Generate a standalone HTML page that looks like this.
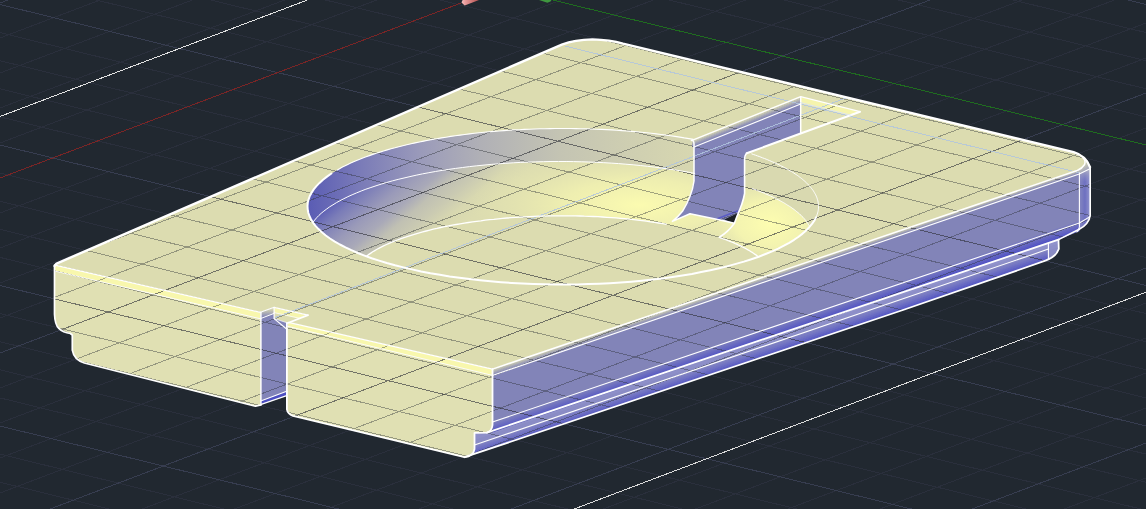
<!DOCTYPE html>
<html><head><meta charset="utf-8"><title>CAD view</title>
<style>html,body{margin:0;padding:0;background:#212830;overflow:hidden}svg{display:block}</style></head>
<body>
<svg width="1146" height="509" viewBox="0 0 1146 509" shape-rendering="geometricPrecision">
<defs>
<clipPath id="obj"><polygon points="54.6,264.8 56.5,263.2 561.8,44.3 575.0,40.3 592.4,39.2 610.0,40.6 623.0,43.5 1073.7,152.0 1082.0,155.5 1087.5,161.0 1090.4,167.4 1090.4,168.5 1079.3,173.9 1077.3,170.5 492.5,369.1 287.8,322.3 308.0,315.1 274.1,307.3 260.5,312.2"/><polygon points="54.4,265.0 260.9,312.6 260.9,405.2 255.5,406.2 84.3,363.0 76.0,358.5 72.3,350.2 72.3,335.0 70.3,333.5 58.8,328.4 55.2,322.0 54.4,314.3"/><polygon points="286.9,322.0 492.5,369.1 492.5,425.0 491.0,430.0 487.0,432.6 474.5,432.6 474.5,449.0 471.5,454.5 464.5,457.2 293.0,415.8 289.0,413.5 286.9,409.4"/><polygon points="492.5,369.1 1077.3,170.5 1079.3,173.9 1079.3,231.3 1058.5,239.6 492.5,432.4"/><polygon points="474.5,432.6 492.5,432.4 1058.5,239.6 1058.8,249.0 1054.0,256.0 1045.4,260.7 903.0,310.0 464.5,457.2 471.5,454.5 474.5,449.0"/><polygon points="1079.3,173.9 1090.4,168.5 1090.4,215.3 1087.0,223.5 1079.2,229.3 1079.0,231.3"/><polygon points="260.5,312.2 274.1,307.3 308.0,315.1 287.8,323.0 286.7,395.6 260.5,404.6"/></clipPath>
<clipPath id="e1"><ellipse cx="563" cy="206.5" rx="255.5" ry="78"/></clipPath>
<clipPath id="rU"><polygon points="492.5,369.1 1077.3,170.5 1079.3,173.9 1079.3,231.3 1058.5,239.6 492.5,432.4"/></clipPath>
<clipPath id="rL"><polygon points="474.5,432.6 492.5,432.4 1058.5,239.6 1058.8,249.0 1054.0,256.0 1045.4,260.7 903.0,310.0 464.5,457.2 471.5,454.5 474.5,449.0"/></clipPath>
<linearGradient id="pg" gradientUnits="userSpaceOnUse" x1="308.0" y1="0.0" x2="708.0" y2="0.0"><stop offset="0.000" stop-color="#5a5cb4"/><stop offset="0.130" stop-color="#7a7bb8"/><stop offset="0.280" stop-color="#9a9aba"/><stop offset="0.430" stop-color="#b0b0b6"/><stop offset="0.630" stop-color="#c4c4b3"/><stop offset="0.830" stop-color="#d0d0b1"/><stop offset="1.000" stop-color="#d9d9b0"/></linearGradient>
<linearGradient id="pg2" gradientUnits="userSpaceOnUse" x1="309.1" y1="217.4" x2="377.8" y2="298.2"><stop offset="0.000" stop-color="#5557b4"/><stop offset="0.151" stop-color="#7a7cb8"/><stop offset="0.340" stop-color="#9a9ab9"/><stop offset="0.481" stop-color="#a9a9b8"/><stop offset="0.594" stop-color="#c0c0b3"/><stop offset="0.717" stop-color="#cacab2"/><stop offset="0.858" stop-color="#d8d8b0"/><stop offset="1.000" stop-color="#dcdcb0"/></linearGradient>
<clipPath id="e2"><ellipse cx="560" cy="238.9" rx="253" ry="77.4"/></clipPath>
<radialGradient id="hl1" gradientUnits="userSpaceOnUse" cx="640" cy="205" r="170" gradientTransform="translate(640 205) scale(1 0.33) translate(-640 -205)"><stop offset="0" stop-color="#fbfbb0" stop-opacity="1"/><stop offset="0.45" stop-color="#f4f4b0" stop-opacity="0.75"/><stop offset="1" stop-color="#e8e8b0" stop-opacity="0"/></radialGradient>
<radialGradient id="hl2" gradientUnits="userSpaceOnUse" cx="770" cy="224" r="66" gradientTransform="translate(770 224) scale(1 0.7) translate(-770 -224)"><stop offset="0" stop-color="#fdfdb0" stop-opacity="1"/><stop offset="0.5" stop-color="#f8f8b0" stop-opacity="0.8"/><stop offset="1" stop-color="#e6e6b0" stop-opacity="0"/></radialGradient>
<linearGradient id="fr" gradientUnits="userSpaceOnUse" x1="0" y1="0" x2="2.2" y2="6.6"><stop offset="0" stop-color="#dcdcb0"/><stop offset="1" stop-color="#8284b8"/></linearGradient>
<linearGradient id="cg" gradientUnits="userSpaceOnUse" x1="1079" y1="0" x2="1091" y2="0"><stop offset="0" stop-color="#8688c0"/><stop offset="0.5" stop-color="#6e70c0"/><stop offset="1" stop-color="#9a9cd0"/></linearGradient>
</defs>
<rect width="1146" height="509" fill="#212830"/>
<g fill="none" stroke-width="1" shape-rendering="crispEdges">
<path d="M0.0 -137.0L1146.0 -572.0M0.0 -102.0L1146.0 -537.0M0.0 -67.0L1146.0 -502.0M0.0 -32.0L1146.0 -467.0M0.0 38.0L1146.0 -397.0M0.0 73.0L1146.0 -362.0M0.0 108.0L1146.0 -327.0M0.0 143.0L1146.0 -292.0M0.0 213.0L1146.0 -222.0M0.0 248.0L1146.0 -187.0M0.0 283.0L1146.0 -152.0M0.0 318.0L1146.0 -117.0M0.0 388.0L1146.0 -47.0M0.0 423.0L1146.0 -12.0M0.0 458.0L1146.0 23.0M0.0 493.0L1146.0 58.0M0.0 563.0L1146.0 128.0M0.0 598.0L1146.0 163.0M0.0 633.0L1146.0 198.0M0.0 668.0L1146.0 233.0M0.0 738.0L1146.0 303.0M0.0 773.0L1146.0 338.0M0.0 808.0L1146.0 373.0M0.0 843.0L1146.0 408.0M0.0 913.0L1146.0 478.0M0.0 948.0L1146.0 513.0M0.0 983.0L1146.0 548.0M0.0 1018.0L1146.0 583.0M0.0 1088.0L1146.0 653.0M0.0 1123.0L1146.0 688.0M0.0 1158.0L1146.0 723.0M0.0 1193.0L1146.0 758.0M0.0 1263.0L1146.0 828.0M0.0 1298.0L1146.0 863.0M0.0 1333.0L1146.0 898.0M0.0 1368.0L1146.0 933.0M0.0 1438.0L1146.0 1003.0M0.0 1473.0L1146.0 1038.0M0.0 1508.0L1146.0 1073.0M0.0 1543.0L1146.0 1108.0M0.0 -473.2L1146.0 -192.2M0.0 -445.1L1146.0 -164.1M0.0 -388.9L1146.0 -107.9M0.0 -360.8L1146.0 -79.8M0.0 -332.7L1146.0 -51.7M0.0 -304.6L1146.0 -23.6M0.0 -248.4L1146.0 32.6M0.0 -220.3L1146.0 60.7M0.0 -192.2L1146.0 88.8M0.0 -164.1L1146.0 116.9M0.0 -107.9L1146.0 173.1M0.0 -79.8L1146.0 201.2M0.0 -51.7L1146.0 229.3M0.0 -23.6L1146.0 257.4M0.0 32.6L1146.0 313.6M0.0 60.7L1146.0 341.7M0.0 88.8L1146.0 369.8M0.0 116.9L1146.0 397.9M0.0 173.1L1146.0 454.1M0.0 201.2L1146.0 482.2M0.0 229.3L1146.0 510.3M0.0 257.4L1146.0 538.4M0.0 313.6L1146.0 594.6M0.0 341.7L1146.0 622.7M0.0 369.8L1146.0 650.8M0.0 397.9L1146.0 678.9M0.0 454.1L1146.0 735.1M0.0 482.2L1146.0 763.2M0.0 510.3L1146.0 791.3M0.0 538.4L1146.0 819.4M0.0 594.6L1146.0 875.6M0.0 622.7L1146.0 903.7M0.0 650.8L1146.0 931.8M0.0 678.9L1146.0 959.9" stroke="#2a2f3c"/>
<path d="M0.0 -172.0L1146.0 -607.0M0.0 3.0L1146.0 -432.0M0.0 353.0L1146.0 -82.0M0.0 528.0L1146.0 93.0M0.0 703.0L1146.0 268.0M0.0 878.0L1146.0 443.0M0.0 1053.0L1146.0 618.0M0.0 1228.0L1146.0 793.0M0.0 1403.0L1146.0 968.0M0.0 -417.0L1146.0 -136.0M0.0 -276.5L1146.0 4.5M0.0 4.5L1146.0 285.5M0.0 145.0L1146.0 426.0M0.0 285.5L1146.0 566.5M0.0 426.0L1146.0 707.0M0.0 566.5L1146.0 847.5" stroke="#373d50"/>
<path d="M0 178L461 3" stroke="#7a2526"/>
<path d="M551 -0.4L1146 145" stroke="#1f6c1f"/>
<path d="M0 116.5L307.4 0" stroke="#e2e2e2"/>
<path d="M574.2 509L1146 292.2" stroke="#dcdcdc"/>
</g>
<linearGradient id="pk" gradientUnits="userSpaceOnUse" x1="461" y1="0" x2="479" y2="0"><stop offset="0" stop-color="#f6c4c4"/><stop offset="0.25" stop-color="#e89a9a"/><stop offset="1" stop-color="#b45050"/></linearGradient>
<polygon points="461.5,2.6 464.7,5.4 479,0 462.6,0" fill="url(#pk)"/>
<polygon points="539,0 547.4,2.8 550.5,1.4 551.5,0" fill="#3f973f"/>
<polygon points="474.5,432.6 492.5,432.4 1058.5,239.6 1058.8,249.0 1054.0,256.0 1045.4,260.7 903.0,310.0 464.5,457.2 471.5,454.5 474.5,449.0" fill="#8a8cc0"/>
<polygon points="492.5,369.1 1077.3,170.5 1079.3,173.9 1079.3,231.3 1058.5,239.6 492.5,432.4" fill="#8284b8"/>
<polygon points="1079.3,173.9 1090.4,168.5 1090.4,215.3 1087.0,223.5 1079.2,229.3 1079.0,231.3" fill="url(#cg)"/>
<polygon points="260.5,312.2 274.1,307.3 308.0,315.1 287.8,323.0 286.7,395.6 260.5,404.6" fill="#8284b8"/>
<polygon points="54.4,265.0 260.9,312.6 260.9,405.2 255.5,406.2 84.3,363.0 76.0,358.5 72.3,350.2 72.3,335.0 70.3,333.5 58.8,328.4 55.2,322.0 54.4,314.3" fill="#e0e0b3"/>
<polygon points="286.9,322.0 492.5,369.1 492.5,425.0 491.0,430.0 487.0,432.6 474.5,432.6 474.5,449.0 471.5,454.5 464.5,457.2 293.0,415.8 289.0,413.5 286.9,409.4" fill="#e0e0b3"/>
<polygon points="54.6,264.8 56.5,263.2 561.8,44.3 575.0,40.3 592.4,39.2 610.0,40.6 623.0,43.5 1073.7,152.0 1082.0,155.5 1087.5,161.0 1090.4,167.4 1090.4,168.5 1079.3,173.9 1077.3,170.5 492.5,369.1 287.8,322.3 308.0,315.1 274.1,307.3 260.5,312.2" fill="#dcdcb0"/>
<linearGradient id="cg2" gradientUnits="userSpaceOnUse" x1="1081" y1="160" x2="1088.5" y2="172"><stop offset="0" stop-color="#dcdcb0"/><stop offset="0.35" stop-color="#cfcfb2"/><stop offset="1" stop-color="#9496c2"/></linearGradient>
<polygon points="1083.0,157.3 1087.5,161.0 1090.4,167.4 1090.4,168.5 1079.3,173.9 1077.3,170.5 1082.0,168.4 1084.8,164.0 1085.2,160.0" fill="url(#cg2)"/>
<linearGradient id="cg3" gradientUnits="userSpaceOnUse" x1="0" y1="169" x2="0" y2="182"><stop offset="0" stop-color="#b8b8c0" stop-opacity="0.9"/><stop offset="1" stop-color="#9092c8" stop-opacity="0"/></linearGradient>
<polygon points="1079.3,173.9 1090.4,168.5 1090.4,183.0 1079.3,186.0" fill="url(#cg3)"/>
<polygon points="492.5,369.1 1077.3,170.5 1077.3,171.2 492.5,370.2" fill="rgb(214,214,176)"/><polygon points="492.5,369.9 1077.3,170.9 1077.3,171.7 492.5,371.0" fill="rgb(203,204,178)"/><polygon points="492.5,370.7 1077.3,171.4 1077.3,172.2 492.5,371.8" fill="rgb(192,192,178)"/><polygon points="492.5,371.5 1077.3,171.8 1077.3,172.6 492.5,372.6" fill="rgb(181,182,180)"/><polygon points="492.5,372.3 1077.3,172.3 1077.3,173.1 492.5,373.4" fill="rgb(169,170,180)"/><polygon points="492.5,373.1 1077.3,172.8 1077.3,173.5 492.5,374.2" fill="rgb(158,160,182)"/><polygon points="492.5,373.9 1077.3,173.2 1077.3,174.0 492.5,375.0" fill="rgb(147,148,182)"/><polygon points="492.5,374.7 1077.3,173.7 1077.3,174.4 492.5,375.8" fill="rgb(136,138,184)"/>
<g clip-path="url(#rU)">
<polygon points="492.5,422.5 1090.0,217.0 1090.0,218.8 492.5,424.3" fill="rgb(124,126,189)"/><polygon points="492.5,424.0 1090.0,218.5 1090.0,220.3 492.5,425.8" fill="rgb(117,119,190)"/><polygon points="492.5,425.5 1090.0,220.0 1090.0,221.8 492.5,427.3" fill="rgb(110,112,192)"/><polygon points="492.5,427.0 1090.0,221.5 1090.0,223.3 492.5,428.8" fill="rgb(103,105,193)"/><polygon points="492.5,428.5 1090.0,223.0 1090.0,224.8 492.5,430.3" fill="rgb(96,98,194)"/><polygon points="492.5,430.0 1090.0,224.5 1090.0,226.3 492.5,431.8" fill="rgb(89,91,196)"/><polygon points="492.5,431.5 1090.0,226.0 1090.0,227.8 492.5,433.3" fill="rgb(82,84,197)"/>
</g>
<g clip-path="url(#rL)">
<polygon points="474.0,433.0 1058.5,240.0 1058.5,244.0 474.0,437.0" fill="rgb(144,146,203)"/><polygon points="474.0,436.7 1058.5,243.7 1058.5,247.6 474.0,440.6" fill="rgb(141,143,200)"/><polygon points="474.0,440.3 1058.5,247.3 1058.5,251.3 474.0,444.3" fill="rgb(138,140,197)"/>
<polygon points="474.0,445.0 1048.4,249.1 1048.4,251.2 474.0,447.1" fill="rgb(130,132,194)"/><polygon points="474.0,446.8 1048.4,250.9 1048.4,253.0 474.0,448.9" fill="rgb(121,123,194)"/><polygon points="474.0,448.6 1048.4,252.7 1048.4,254.8 474.0,450.7" fill="rgb(113,115,195)"/><polygon points="474.0,450.4 1048.4,254.5 1048.4,256.5 474.0,452.4" fill="rgb(104,106,195)"/><polygon points="474.0,452.1 1048.4,256.2 1048.4,258.3 474.0,454.2" fill="rgb(95,97,195)"/><polygon points="474.0,453.9 1048.4,258.0 1048.4,260.1 474.0,456.0" fill="rgb(87,89,196)"/><polygon points="474.0,455.7 1048.4,259.8 1048.4,261.9 474.0,457.8" fill="rgb(78,80,196)"/>
</g>
<polygon points="54.6,265.0 260.5,312.4 260.5,318.6 54.6,271.0" fill="#f8f7ad"/>
<polygon points="287.8,322.3 492.5,369.3 492.5,375.3 287.8,326.4" fill="#f8f7ad"/>
<linearGradient id="ng" gradientUnits="userSpaceOnUse" x1="0" y1="309" x2="0" y2="317"><stop offset="0" stop-color="#d6d6b2"/><stop offset="1" stop-color="#8284b8"/></linearGradient>
<polygon points="260.5,312.2 274.1,307.3 274.1,313.4 260.5,318.6" fill="url(#ng)"/>
<polygon points="274.1,307.3 308.0,315.1 287.8,323.0 274.1,318.6" fill="#dcdcb0"/>
<polygon points="274.1,307.8 306.0,315.0 299.0,318.2 274.1,312.6" fill="#f6f5ad"/>
<polygon points="274.1,318.6 287.8,323.0 286.9,330.0 274.1,320.5" fill="#8284b8"/>
<polygon points="260.7,401.0 286.7,391.2 286.7,395.6 260.5,404.6" fill="#4c4ec2"/>
<g clip-path="url(#e1)">
<rect x="300" y="120" width="530" height="170" fill="url(#pg)"/>
<ellipse cx="560" cy="238.9" rx="253" ry="77.4" fill="url(#pg2)"/>
<g clip-path="url(#e2)">
<rect x="300" y="120" width="530" height="170" fill="url(#hl1)"/>
<rect x="700" y="150" width="130" height="140" fill="url(#hl2)"/>
</g>
<ellipse cx="562" cy="280.4" rx="211" ry="64.6" fill="#dcdcb0"/>
</g>
<polygon points="800.7,96.7 860.0,111.7 801.7,133.3 800.7,133.3" fill="#e0e0b3"/>
<polygon points="800.7,96.7 860.0,111.7 851.0,115.0 800.7,102.3" fill="#f5f4ad"/>
<polygon points="694.0,141.0 800.7,97.5 800.7,133.3 746.7,153.6 744.6,160.0 744.6,193.5 740.8,208.7 737.0,216.3 734.4,223.2 723.0,220.0 715.4,218.9 690.0,213.8 672.4,221.4 682.5,211.3 690.0,196.0 694.0,181.0" fill="#8284b8"/>
<g clip-path="url(#sw)">
</g>
<polygon points="692.0,140.5 800.7,97.0 800.7,98.2 692.0,141.7" fill="rgb(214,214,177)"/><polygon points="692.0,141.4 800.7,97.9 800.7,99.2 692.0,142.7" fill="rgb(201,201,178)"/><polygon points="692.0,142.4 800.7,98.9 800.7,100.1 692.0,143.6" fill="rgb(188,189,179)"/><polygon points="692.0,143.3 800.7,99.8 800.7,101.0 692.0,144.5" fill="rgb(175,176,180)"/><polygon points="692.0,144.2 800.7,100.7 800.7,101.9 692.0,145.4" fill="rgb(162,163,181)"/><polygon points="692.0,145.1 800.7,101.6 800.7,102.9 692.0,146.4" fill="rgb(149,151,182)"/><polygon points="692.0,146.1 800.7,102.6 800.7,103.8 692.0,147.3" fill="rgb(136,138,183)"/>
<polygon points="724.3,219.6 737.5,213.2 734.4,223.2" fill="#1c2026"/>
<path d="M716.7 218.9L738 210.8" stroke="#5a5cc4" stroke-width="1.6" fill="none"/>
<g clip-path="url(#obj)" fill="none" stroke-width="1" shape-rendering="crispEdges">
<path d="M0.0 -137.0L1146.0 -572.0M0.0 -102.0L1146.0 -537.0M0.0 -67.0L1146.0 -502.0M0.0 -32.0L1146.0 -467.0M0.0 38.0L1146.0 -397.0M0.0 73.0L1146.0 -362.0M0.0 108.0L1146.0 -327.0M0.0 143.0L1146.0 -292.0M0.0 213.0L1146.0 -222.0M0.0 248.0L1146.0 -187.0M0.0 283.0L1146.0 -152.0M0.0 318.0L1146.0 -117.0M0.0 388.0L1146.0 -47.0M0.0 423.0L1146.0 -12.0M0.0 458.0L1146.0 23.0M0.0 493.0L1146.0 58.0M0.0 563.0L1146.0 128.0M0.0 598.0L1146.0 163.0M0.0 633.0L1146.0 198.0M0.0 668.0L1146.0 233.0M0.0 738.0L1146.0 303.0M0.0 773.0L1146.0 338.0M0.0 808.0L1146.0 373.0M0.0 843.0L1146.0 408.0M0.0 913.0L1146.0 478.0M0.0 948.0L1146.0 513.0M0.0 983.0L1146.0 548.0M0.0 1018.0L1146.0 583.0M0.0 1088.0L1146.0 653.0M0.0 1123.0L1146.0 688.0M0.0 1158.0L1146.0 723.0M0.0 1193.0L1146.0 758.0M0.0 1263.0L1146.0 828.0M0.0 1298.0L1146.0 863.0M0.0 1333.0L1146.0 898.0M0.0 1368.0L1146.0 933.0M0.0 1438.0L1146.0 1003.0M0.0 1473.0L1146.0 1038.0M0.0 1508.0L1146.0 1073.0M0.0 1543.0L1146.0 1108.0M0.0 -473.2L1146.0 -192.2M0.0 -445.1L1146.0 -164.1M0.0 -388.9L1146.0 -107.9M0.0 -360.8L1146.0 -79.8M0.0 -332.7L1146.0 -51.7M0.0 -304.6L1146.0 -23.6M0.0 -248.4L1146.0 32.6M0.0 -220.3L1146.0 60.7M0.0 -192.2L1146.0 88.8M0.0 -164.1L1146.0 116.9M0.0 -107.9L1146.0 173.1M0.0 -79.8L1146.0 201.2M0.0 -51.7L1146.0 229.3M0.0 -23.6L1146.0 257.4M0.0 32.6L1146.0 313.6M0.0 60.7L1146.0 341.7M0.0 88.8L1146.0 369.8M0.0 116.9L1146.0 397.9M0.0 173.1L1146.0 454.1M0.0 201.2L1146.0 482.2M0.0 229.3L1146.0 510.3M0.0 257.4L1146.0 538.4M0.0 313.6L1146.0 594.6M0.0 341.7L1146.0 622.7M0.0 369.8L1146.0 650.8M0.0 397.9L1146.0 678.9M0.0 454.1L1146.0 735.1M0.0 482.2L1146.0 763.2M0.0 510.3L1146.0 791.3M0.0 538.4L1146.0 819.4M0.0 594.6L1146.0 875.6M0.0 622.7L1146.0 903.7M0.0 650.8L1146.0 931.8M0.0 678.9L1146.0 959.9" stroke="#2e3138" stroke-opacity="0.42"/>
<path d="M0.0 -172.0L1146.0 -607.0M0.0 3.0L1146.0 -432.0M0.0 353.0L1146.0 -82.0M0.0 528.0L1146.0 93.0M0.0 703.0L1146.0 268.0M0.0 878.0L1146.0 443.0M0.0 1053.0L1146.0 618.0M0.0 1228.0L1146.0 793.0M0.0 1403.0L1146.0 968.0M0.0 -417.0L1146.0 -136.0M0.0 -276.5L1146.0 4.5M0.0 4.5L1146.0 285.5M0.0 145.0L1146.0 426.0M0.0 285.5L1146.0 566.5M0.0 426.0L1146.0 707.0M0.0 566.5L1146.0 847.5" stroke="#2e3138" stroke-opacity="0.62"/>
<path d="M275 317.6L860 92.4" stroke="#b0c4de" stroke-opacity="0.85"/>
<path d="M565 46L1080 173" stroke="#b0c4de" stroke-opacity="0.85"/>
</g>
<g fill="none" stroke="#ffffff" stroke-linejoin="round" stroke-linecap="round">
<path d="M54.6 266 L56.5 263.6 L561.8 44.6 Q575 39.6 592.4 39.4 Q610 40 623 43.6 L1073.7 152.2 Q1086 156 1090 167.2" stroke-width="2.4"/>
<path d="M1090.2 167 L1090.2 215.3 Q1089 224 1079.2 229.3" stroke-width="1.6"/>
<path d="M55 265.2L260.5 312.4" stroke-width="1.3"/>
<path d="M54.6 271L260.5 318.8" stroke-width="1" stroke-opacity="0.95"/>
<path d="M287.8 326.4L492.5 375.4" stroke-width="1" stroke-opacity="0.9"/>
<path d="M308 315.1L287.8 323" stroke-width="1.7"/>
<path d="M274.1 307.3L308 315.1 M288.5 322.3L492.5 369.1" stroke-width="1.3"/>
<path d="M274.1 312.6L299 318.2 M274.1 318.6L287.8 323" stroke-width="0.9" stroke-opacity="0.85"/>
<path d="M260.5 312.2L274.1 307.3L274.1 318.6L286.9 329.2" stroke-width="1.2"/>
<path d="M260.5 318.6L274.1 313.4" stroke-width="1"/>
<path d="M492.5 369.1L1077.3 170.5Q1082 168.6 1084.6 164.5Q1086 160.5 1083 157.6" stroke-width="1.5"/>
<path d="M492.5 375.4L1079.3 173.9L1090.4 168.6" stroke-width="1.1"/>
<path d="M492.5 422L1079.4 223L1090 216.6" stroke-width="1.1"/>
<path d="M487 432.6L1058.5 239.6" stroke-width="1.8"/>
<path d="M474.5 445L1030 255.4L1048.4 249.1" stroke-width="1.1"/>
<path d="M464.5 457.2L903 310L1045.4 260.7 Q1056 257 1058.8 249 L1058.5 239.6" stroke-width="1.8"/>
<path d="M1079.4 173L1079.4 226.7Q1079.2 230 1077 231.8 M1048.4 243L1048.4 258.4" stroke-width="1.1"/>
<path d="M1079.2 229.3 L1058.5 239.6" stroke-width="1.6"/>
<path d="M54.5 265L54.5 314.3Q55 325 58.8 328.4Q63 332.5 70.3 333.5L72.3 335L72.3 350.2Q74 360 84.3 363L255.5 406.2L260.9 405" stroke-width="1.7"/>
<path d="M260.9 312.6L260.9 405" stroke-width="1.5"/>
<path d="M286.9 323L286.9 409.4Q287.6 414 293 415.8L464.5 457.2Q473.5 456 474.5 449L474.5 432.8L487 432.6Q492 431 492.5 425L492.5 369.1" stroke-width="1.8"/>
<path d="M260.7 401L286.7 391.2 M260.5 404.6L286.7 395.6" stroke-width="1.2"/>
<path d="M693.3 139.4L688.9 138.6L684.3 137.9L679.8 137.1L675.1 136.4L670.5 135.7L665.8 135.1L661.0 134.5L656.2 133.9L651.4 133.3L646.5 132.8L641.6 132.3L636.7 131.8L631.8 131.4L626.8 131.0L621.7 130.6L616.7 130.2L611.6 129.9L606.6 129.6L601.5 129.4L596.4 129.2L591.2 129.0L586.1 128.8L580.9 128.7L575.8 128.6L570.6 128.5L565.5 128.5L560.3 128.5L555.1 128.5L550.0 128.6L544.8 128.7L539.7 128.8L534.5 129.0L529.4 129.2L524.3 129.4L519.2 129.7L514.1 129.9L509.0 130.3L504.0 130.6L499.0 131.0L494.0 131.4L489.0 131.8L484.1 132.3L479.2 132.8L474.4 133.3L469.5 133.9L464.7 134.5L460.0 135.1L455.3 135.8L450.6 136.4L446.0 137.2L441.4 137.9L436.9 138.7L432.5 139.4L428.0 140.3L423.7 141.1L419.4 142.0L415.1 142.9L411.0 143.8L406.8 144.8L402.8 145.7L398.8 146.7L394.9 147.8L391.0 148.8L387.2 149.9L383.5 151.0L379.9 152.1L376.3 153.2L372.8 154.4L369.4 155.6L366.1 156.8L362.8 158.0L359.7 159.3L356.6 160.5L353.6 161.8L350.7 163.1L347.8 164.4L345.1 165.8L342.4 167.1L339.9 168.5L337.4 169.9" stroke-width="1.15"/>
<path d="M331.4 173.5L327.0 176.6L323.0 179.7L319.5 182.9L316.4 186.1L313.7 189.4L311.6 192.7L309.8 196.0L308.6 199.3L307.8 202.6L307.5 206.0L307.7 209.3L308.3 212.7L309.4 216.0L311.0 219.3L313.0 222.6L315.5 225.9L318.5 229.1L321.9 232.3L325.8 235.5L330.0 238.5L334.8 241.6L339.9 244.5L345.5 247.4L351.4 250.2L357.8 253.0L364.5 255.6L371.6 258.2L379.1 260.6L386.8 263.0L395.0 265.3L403.4 267.4L412.1 269.4L421.1 271.4L430.4 273.2L439.9 274.8L449.6 276.4L459.5 277.8L469.7 279.1L480.0 280.3L490.4 281.3L501.0 282.2L511.7 282.9L522.5 283.5L533.4 284.0L544.3 284.3L555.3 284.5L566.3 284.5L577.3 284.4L588.2 284.1L599.1 283.7L609.9 283.2L620.7 282.5L631.3 281.7L641.8 280.7L652.2 279.6L662.4 278.4L672.4 277.0L682.3 275.5L691.9 273.9L701.2 272.1L710.3 270.2L719.2 268.2L727.7 266.1L735.9 263.9L743.9 261.6L751.4 259.2L758.7 256.7L765.6 254.0L772.1 251.3L778.2 248.6L783.9 245.7L789.2 242.8L794.1 239.8L798.6 236.7L802.6 233.6L806.2 230.4L809.3 227.2L812.0 223.9L814.3 220.7L816.0 217.4" stroke-width="2"/>
<path d="M751.8 153.9L753.7 154.6L755.5 155.2L757.4 155.9L759.2 156.5L761.0 157.2L762.7 157.9L764.5 158.5L766.2 159.2L767.9 159.9L769.5 160.6L771.2 161.3L772.8 162.0L774.4 162.7L775.9 163.4L777.5 164.1L779.0 164.8L780.5 165.6L781.9 166.3L783.4 167.0L784.8 167.8L786.2 168.5L787.5 169.3L788.8 170.0L790.1 170.8L791.4 171.5L792.7 172.3L793.9 173.1L795.1 173.9L796.2 174.6L797.4 175.4L798.5 176.2L799.5 177.0L800.6 177.8L801.6 178.6L802.6 179.4L803.5 180.2L804.5 181.0L805.4 181.8L806.3 182.6L807.1 183.5L807.9 184.3L808.7 185.1L809.5 185.9L810.2 186.8L810.9 187.6L811.5 188.4L812.2 189.3L812.8 190.1L813.4 190.9L813.9 191.8L814.4 192.6L814.9 193.5L815.4 194.3L815.8 195.1L816.2 196.0L816.5 196.8L816.9 197.7L817.2 198.6L817.4 199.4L817.7 200.3L817.9 201.1L818.1 202.0L818.2 202.8L818.3 203.7L818.4 204.5L818.5 205.4L818.5 206.3L818.5 207.1L818.5 208.0L818.4 208.8L818.3 209.7L818.2 210.5L818.0 211.4L817.8 212.2L817.6 213.1L817.3 214.0L817.0 214.8L816.7 215.7L816.4 216.5L816.0 217.4" stroke-width="1"/>
</g>
<g clip-path="url(#e1)" fill="none" stroke="#fff">
<path d="M315.6 258.9L313.8 256.7L312.1 254.4L310.7 252.1L309.5 249.9L308.6 247.6L307.9 245.2L307.3 242.9L307.1 240.6L307.0 238.3L307.2 236.0L307.6 233.7L308.2 231.4L309.1 229.1L310.1 226.8L311.4 224.5L313.0 222.2L314.7 220.0L316.7 217.7L318.8 215.5L321.2 213.3L323.9 211.1L326.7 209.0L329.7 206.8L333.0 204.8L336.4 202.7L340.0 200.7L343.9 198.7L347.9 196.7L352.1 194.8L356.6 192.9L361.2 191.0L365.9 189.2L370.9 187.5L376.0 185.8L381.3 184.1L386.7 182.5L392.3 180.9L398.1 179.4L404.0 178.0L410.0 176.6L416.2 175.2L422.4 173.9L428.9 172.7L435.4 171.5L442.1 170.4L448.8 169.4L455.7 168.4L462.6 167.5L469.6 166.6L476.8 165.8L484.0 165.1L491.2 164.4L498.5 163.8L505.9 163.3L513.3 162.8L520.8 162.4L528.3 162.1L535.8 161.9L543.4 161.7L551.0 161.5L558.5 161.5L566.1 161.5L573.7 161.6L581.2 161.8L588.8 162.0L596.3 162.3L603.8 162.7L611.2 163.1L618.6 163.6L625.9 164.2L633.2 164.8L640.4 165.5L647.6 166.3L654.7 167.1L661.6 168.0L668.5 169.0L675.3 170.0L682.0 171.1L688.6 172.2L695.1 173.5" stroke-width="1"/>
<path d="M751.9 188.5L753.3 189.0L754.8 189.5L756.2 190.0L757.6 190.6L759.0 191.1L760.4 191.6L761.7 192.2L763.1 192.7L764.4 193.3L765.7 193.9L767.0 194.4L768.3 195.0L769.6 195.5L770.8 196.1L772.1 196.7L773.3 197.3L774.5 197.8L775.7 198.4L776.8 199.0L778.0 199.6L779.1 200.2L780.2 200.8L781.3 201.4L782.4 202.0L783.5 202.6L784.5 203.2L785.5 203.8L786.5 204.4L787.5 205.1L788.5 205.7L789.5 206.3L790.4 206.9L791.3 207.5L792.2 208.2L793.1 208.8L794.0 209.4L794.8 210.1L795.6 210.7L796.4 211.4L797.2 212.0L798.0 212.6L798.8 213.3L799.5 213.9L800.2 214.6L800.9 215.2L801.6 215.9L802.2 216.6L802.9 217.2L803.5 217.9L804.1 218.5L804.7 219.2L805.2 219.9L805.8 220.5L806.3 221.2L806.8 221.9L807.3 222.5L807.7 223.2L808.2 223.9L808.6 224.6L809.0 225.2L809.4 225.9L809.8 226.6L810.1 227.3L810.5 227.9L810.8 228.6L811.1 229.3L811.3 230.0L811.6 230.7L811.8 231.4L812.0 232.0L812.2 232.7L812.4 233.4L812.5 234.1L812.6 234.8L812.8 235.5L812.8 236.2L812.9 236.8L813.0 237.5L813.0 238.2L813.0 238.9" stroke-width="1"/>
<path d="M363.7 258.3L365.3 257.0L367.1 255.7L368.9 254.4L370.8 253.1L372.7 251.8L374.8 250.6L377.0 249.3L379.2 248.1L381.6 246.9L384.0 245.7L386.5 244.5L389.1 243.4L391.8 242.2L394.5 241.1L397.3 240.0L400.3 238.9L403.2 237.8L406.3 236.8L409.4 235.8L412.7 234.8L415.9 233.8L419.3 232.8L422.7 231.9L426.2 231.0L429.7 230.1L433.3 229.2L437.0 228.4L440.7 227.5L444.5 226.7L448.4 226.0L452.3 225.2L456.2 224.5L460.2 223.8L464.3 223.1L468.4 222.5L472.5 221.9L476.7 221.3L480.9 220.8L485.1 220.2L489.4 219.7L493.8 219.3L498.1 218.8L502.5 218.4L506.9 218.0L511.4 217.7L515.9 217.4L520.4 217.1L524.9 216.8L529.4 216.6L533.9 216.4L538.5 216.2L543.1 216.1L547.7 215.9L552.2 215.9L556.8 215.8L561.4 215.8L566.0 215.8L570.6 215.9L575.2 215.9L579.8 216.0L584.3 216.2L588.9 216.3L593.5 216.5L598.0 216.7L602.5 217.0L607.0 217.3L611.5 217.6L615.9 217.9L620.4 218.3L624.8 218.7L629.1 219.2L633.5 219.6L637.8 220.1L642.0 220.6L646.3 221.2L650.5 221.8L654.6 222.4L658.7 223.0L662.8 223.6L666.8 224.3" stroke-width="1.3"/>
<path d="M718.6 237.1L719.6 237.4L720.5 237.8L721.5 238.1L722.5 238.5L723.4 238.8L724.4 239.1L725.3 239.5L726.2 239.8L727.2 240.2L728.1 240.6L729.0 240.9L729.9 241.3L730.8 241.6L731.7 242.0L732.5 242.4L733.4 242.7L734.3 243.1L735.1 243.5L735.9 243.8L736.8 244.2L737.6 244.6L738.4 245.0L739.2 245.3L740.0 245.7L740.8 246.1L741.6 246.5L742.4 246.9L743.1 247.3L743.9 247.7L744.6 248.0L745.4 248.4L746.1 248.8L746.8 249.2L747.5 249.6L748.2 250.0L748.9 250.4L749.6 250.8L750.3 251.2L750.9 251.6L751.6 252.0L752.2 252.4L752.8 252.8L753.5 253.3L754.1 253.7L754.7 254.1L755.3 254.5L755.9 254.9L756.5 255.3L757.0 255.7L757.6 256.2L758.1 256.6L758.7 257.0L759.2 257.4L759.7 257.8L760.2 258.3L760.7 258.7L761.2 259.1L761.7 259.6L762.2 260.0L762.6 260.4L763.1 260.8L763.5 261.3L764.0 261.7L764.4 262.1L764.8 262.6L765.2 263.0L765.6 263.4L766.0 263.9L766.4 264.3L766.7 264.8L767.1 265.2L767.4 265.6L767.7 266.1L768.1 266.5L768.4 267.0L768.7 267.4L769.0 267.8L769.3 268.3L769.5 268.7L769.8 269.2" stroke-width="1.3"/>
</g>
<g fill="none" stroke="#ffffff" stroke-linejoin="round" stroke-linecap="round">
<path d="M691.4 140.4 Q694 140 694 144 L694 181 Q692 196 682.5 211.3 Q678 217 672.4 221.4 L690 213.8 L715.4 218.9 L734.4 223.2" stroke-width="1.5"/>
<path d="M692 140.4L800.7 96.7L860 111.7" stroke-width="1.3"/>
<path d="M860 111.7L746.7 153.3" stroke-width="2"/>
<path d="M694 147L800.7 104" stroke-width="1.1"/>
<path d="M800.7 96.7L800.7 133.3" stroke-width="1.5"/>
<path d="M800.7 102.6L851 115.2" stroke="#dfe8f4" stroke-width="1" stroke-opacity="0.9"/>
<path d="M746.7 153.3Q744.6 155 744.6 160L744.6 193.5Q743 203 737 216.3L734.4 223.2 Q728 232 720 236.7" stroke-width="1.6"/>
</g>
</svg>
</body></html>
